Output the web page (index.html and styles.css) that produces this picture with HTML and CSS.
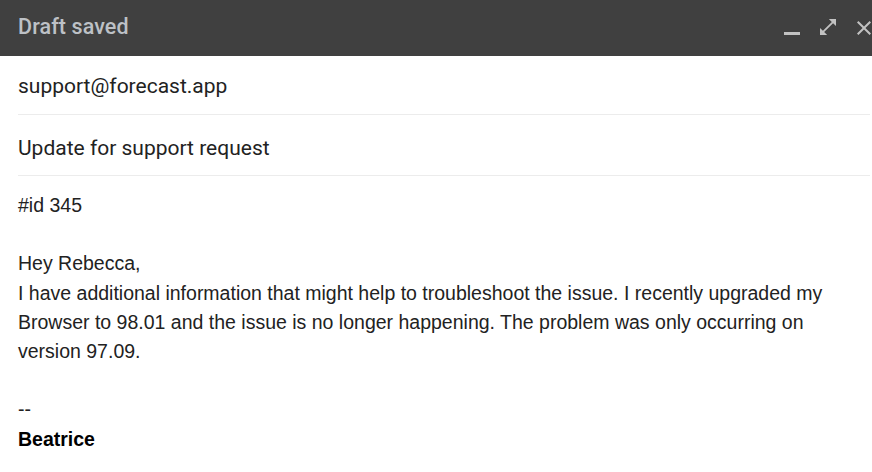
FILE: index.html
```html
<!DOCTYPE html>
<html lang="en">
<head>
  <meta charset="UTF-8">
  <meta name="viewport" content="width=device-width, initial-scale=1.0">
  <title>Draft saved</title>
  <link rel="stylesheet" href="styles.css">
</head>
<body>
  <div class="compose">
    <div class="titlebar">
      <div class="title">Draft saved</div>
      <div class="window-actions">
        <svg class="icon icon-min" viewBox="0 0 16 3" width="16" height="3" aria-label="Minimize">
          <rect x="0" y="0" width="16" height="3"/>
        </svg>
        <svg class="icon icon-full" viewBox="3 3 18 18" width="16" height="16" aria-label="Full screen">
          <path d="M21 11V3h-8l3.29 3.29-10 10L3 13v8h8l-3.29-3.29 10-10z"/>
        </svg>
        <svg class="icon icon-close" viewBox="5 5 14 14" width="14" height="14" aria-label="Close">
          <path d="M19 6.41L17.59 5 12 10.59 6.41 5 5 6.41 10.59 12 5 17.59 6.41 19 12 13.41 17.59 19 19 17.59 13.41 12z"/>
        </svg>
      </div>
    </div>

    <div class="field field-to">support@forecast.app</div>
    <div class="field field-subject">Update for support request</div>

    <div class="message">
      <p>#id 345</p>
      <p class="blank"></p>
      <p>Hey Rebecca,<br>
      I have additional information that might help to troubleshoot the issue. I recently upgraded my Browser to 98.01 and the issue is no longer happening. The problem was only occurring on version 97.09.</p>
      <p class="blank"></p>
      <p>--<br>
      <strong>Beatrice</strong></p>
    </div>
  </div>
</body>
</html>
```

FILE: styles.css
```css
:root {
  --bar: #404040;
  --bar-text: #bdc1c6;
  --icon: #c2c2c2;
  --text: #222222;
  --line: #ececec;
}

html, body {
  margin: 0;
  background: #ffffff;
}

.compose {
  width: 872px;
  height: 472px;
  overflow: hidden;
}

.titlebar {
  height: 56px;
  background: var(--bar);
  display: flex;
  align-items: flex-start;
  justify-content: space-between;
  padding: 0 1px 0 18px;
  box-sizing: border-box;
}

.title {
  font-family: Roboto, "Noto Sans", sans-serif;
  font-weight: 500;
  font-size: 21.5px;
  line-height: 26px;
  padding-top: 14px;
  color: var(--bar-text);
  letter-spacing: 0.1px;
}

.window-actions {
  display: flex;
  align-items: flex-end;
  height: 35px;
}

.icon {
  display: block;
  fill: var(--icon);
}

.icon-full {
  margin-left: 20px;
}

.icon-close {
  margin-left: 21px;
}

.field {
  margin: 0 2px 0 18px;
  font-family: Roboto, "Noto Sans", sans-serif;
  font-size: 21px;
  line-height: 24px;
  color: var(--text);
  border-bottom: 1px solid var(--line);
}

.field-to {
  padding: 18px 0 16px;
}

.field-subject {
  padding: 21px 0 15px;
}

.message {
  margin: 0 2px 0 18px;
  padding-top: 15px;
  font-family: "Liberation Sans", Arial, sans-serif;
  font-size: 19.5px;
  line-height: 29.2px;
  color: var(--text);
}

.message p {
  margin: 0;
}

.message .blank {
  height: 29.2px;
}

.message strong {
  font-weight: bold;
  color: #000000;
}
```
